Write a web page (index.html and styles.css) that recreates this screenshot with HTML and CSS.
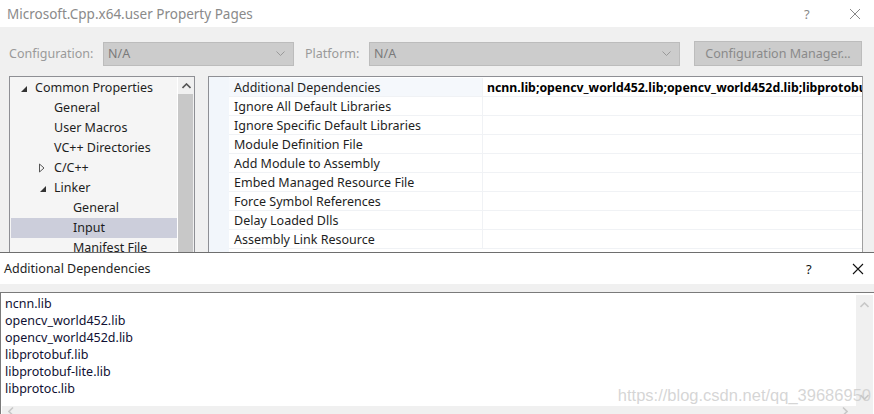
FILE: index.html
```html
<!DOCTYPE html>
<html>
<head>
<meta charset="utf-8">
<link rel="stylesheet" href="styles.css">
</head>
<body>
<div class="back">
  <div class="titlebar">
    <span class="title">Microsoft.Cpp.x64.user Property Pages</span>
    <span class="tb-help">?</span>
    <span class="tb-close">
      <svg width="12" height="12" viewBox="0 0 12 12"><path d="M1 1L11 11M11 1L1 11" stroke="#888" stroke-width="1" fill="none"/></svg>
    </span>
  </div>
  <div class="body">
    <div class="config-row">
      <span class="lbl lbl-config">Configuration:</span>
      <div class="combo combo-config"><span>N/A</span><svg class="chev" width="9" height="6" viewBox="0 0 9 6"><path d="M0.5 0.5L4.5 4.5L8.5 0.5" stroke="#999" fill="none"/></svg></div>
      <span class="lbl lbl-platform">Platform:</span>
      <div class="combo combo-platform"><span>N/A</span><svg class="chev" width="9" height="6" viewBox="0 0 9 6"><path d="M0.5 0.5L4.5 4.5L8.5 0.5" stroke="#999" fill="none"/></svg></div>
      <div class="btn">Configuration Manager...</div>
    </div>
    <div class="panels">
      <div class="tree">
        <div class="tree-list">
          <div class="ti l0"><svg class="tri" width="8" height="8" viewBox="0 0 8 8"><path d="M7 1V7H1Z" fill="#333"/></svg>Common Properties</div>
          <div class="ti l1">General</div>
          <div class="ti l1">User Macros</div>
          <div class="ti l1">VC++ Directories</div>
          <div class="ti l1"><svg class="tri tri-r" width="8" height="10" viewBox="0 0 8 10"><path d="M1.5 1V9L6 5Z" fill="none" stroke="#555" stroke-width="1"/></svg>C/C++</div>
          <div class="ti l1"><svg class="tri" width="8" height="8" viewBox="0 0 8 8"><path d="M7 1V7H1Z" fill="#333"/></svg>Linker</div>
          <div class="ti l2">General</div>
          <div class="ti l2 sel">Input</div>
          <div class="ti l2">Manifest File</div>
        </div>
        <div class="vscroll">
          <div class="sb-up"><svg width="9" height="6" viewBox="0 0 9 6"><path d="M0.5 5L4.5 1L8.5 5" stroke="#555" stroke-width="1.6" fill="none"/></svg></div>
          <div class="sb-thumb"></div>
        </div>
      </div>
      <div class="grid">
        <div class="gutter"></div>
        <div class="rows">
          <div class="row"><div class="name">Additional Dependencies</div><div class="val bold">ncnn.lib;opencv_world452.lib;opencv_world452d.lib;libprotobuf.lib;libprotobuf-lite.lib;libprotoc.lib</div></div>
          <div class="row"><div class="name">Ignore All Default Libraries</div><div class="val"></div></div>
          <div class="row"><div class="name">Ignore Specific Default Libraries</div><div class="val"></div></div>
          <div class="row"><div class="name">Module Definition File</div><div class="val"></div></div>
          <div class="row"><div class="name">Add Module to Assembly</div><div class="val"></div></div>
          <div class="row"><div class="name">Embed Managed Resource File</div><div class="val"></div></div>
          <div class="row"><div class="name">Force Symbol References</div><div class="val"></div></div>
          <div class="row"><div class="name">Delay Loaded Dlls</div><div class="val"></div></div>
          <div class="row"><div class="name">Assembly Link Resource</div><div class="val"></div></div>
        </div>
      </div>
    </div>
  </div>
</div>
<div class="front">
  <div class="f-titlebar">
    <span class="f-title">Additional Dependencies</span>
    <span class="f-help">?</span>
    <span class="f-close">
      <svg width="12" height="12" viewBox="0 0 12 12"><path d="M1 1L11 11M11 1L1 11" stroke="#111" stroke-width="1.1" fill="none"/></svg>
    </span>
  </div>
  <div class="f-body">
    <div class="editor">
      <div class="lines">
        <div>ncnn.lib</div>
        <div>opencv_world452.lib</div>
        <div>opencv_world452d.lib</div>
        <div>libprotobuf.lib</div>
        <div>libprotobuf-lite.lib</div>
        <div>libprotoc.lib</div>
      </div>
      <div class="e-vscroll">
        <svg width="9" height="6" viewBox="0 0 9 6"><path d="M0.5 5L4.5 1L8.5 5" stroke="#c8c8c8" stroke-width="1.6" fill="none"/></svg>
        <svg width="9" height="6" viewBox="0 0 9 6"><path d="M0.5 1L4.5 5L8.5 1" stroke="#c8c8c8" stroke-width="1.6" fill="none"/></svg>
      </div>
    </div>
    <div class="e-hscroll">
      <svg width="6" height="9" viewBox="0 0 6 9"><path d="M5 0.5L1 4.5L5 8.5" stroke="#c8c8c8" stroke-width="1.6" fill="none"/></svg>
      <svg width="6" height="9" viewBox="0 0 6 9"><path d="M1 0.5L5 4.5L1 8.5" stroke="#c8c8c8" stroke-width="1.6" fill="none"/></svg>
    </div>
    <div class="watermark">https://blog.csdn.net/qq_39686950</div>
  </div>
</div>
</body>
</html>
```

FILE: styles.css
```css
* { box-sizing: border-box; }
html, body {
  margin: 0;
  padding: 0;
  width: 874px;
  height: 414px;
  overflow: hidden;
  background: #f0f0f0;
  font-family: "Noto Sans", "Open Sans", sans-serif;
  font-size: 12px;
}
.back {
  height: 252px;
  overflow: hidden;
  background: #f0f0f0;
}
.titlebar {
  height: 27px;
  background: #fff;
  display: flex;
  align-items: center;
  padding-left: 7px;
}
.title {
  color: #8a8a8a;
  font-size: 13.5px;
  flex: 1;
}
.tb-help {
  color: #888;
  font-size: 13px;
  width: 45px;
}
.tb-close {
  width: 25px;
  display: flex;
  align-items: center;
}
.body {
  padding: 14px 0 0 9px;
}
.config-row {
  display: flex;
  align-items: center;
  height: 25px;
}
.lbl {
  color: #9a9a9a;
  font-size: 12.5px;
}
.lbl-config { width: 94px; }
.lbl-platform { width: 64px; margin-left: 11px; }
.combo {
  height: 24px;
  background: #cccccc;
  border: 1px solid #bcbcbc;
  display: flex;
  align-items: center;
  justify-content: space-between;
  padding: 0 8px 0 4px;
  color: #7a7a7a;
  font-size: 12.5px;
}
.combo-config { width: 191px; }
.combo-platform { width: 311px; }
.btn {
  margin-left: 14px;
  width: 168px;
  height: 25px;
  background: #cccccc;
  border: 1px solid #bcbcbc;
  color: #8a8a8a;
  font-size: 12.5px;
  display: flex;
  align-items: center;
  justify-content: center;
}
.panels {
  display: flex;
  margin-top: 10px;
  gap: 13px;
}
.tree {
  width: 186px;
  height: 200px;
  border: 1px solid #8e8f94;
  background: #f5f5f5;
  display: flex;
}
.tree-list {
  flex: 1;
  padding-top: 1px;
  padding-left: 1px;
}
.ti {
  height: 20px;
  line-height: 20px;
  color: #1e1e1e;
  font-size: 12.5px;
  position: relative;
  white-space: nowrap;
}
.l0 { padding-left: 24px; }
.l1 { padding-left: 43px; }
.l2 { padding-left: 62px; }
.sel { background: #cccedb; }
.tri {
  position: absolute;
  top: 7px;
}
.l0 .tri { left: 9px; }
.l1 .tri { left: 28px; }
.l1 .tri-r { top: 5px; left: 27px; }
.vscroll {
  width: 17px;
  background: #f0f0f0;
  border-left: 1px solid #fff;
  display: flex;
  flex-direction: column;
}
.sb-up {
  height: 17px;
  display: flex;
  align-items: center;
  justify-content: center;
}
.sb-thumb {
  margin: 0 1px 0 0;
  flex: 1;
  background: #c8c8c8;
}
.grid {
  width: 655px;
  height: 200px;
  border: 1px solid #8e8f94;
  border-right-color: #a0a0a0;
  background: #fff;
  display: flex;
}
.gutter {
  width: 20px;
  background: #f2f6fb;
}
.rows {
  flex: 1;
  padding-top: 1px;
  overflow: hidden;
}
.row {
  display: flex;
  height: 19px;
  border-bottom: 1px solid #f0f2f5;
}
.name {
  width: 253px;
  padding-left: 5px;
  padding-top: 1px;
  line-height: 18px;
  color: #1e1e1e;
  font-size: 12.5px;
  white-space: nowrap;
  background: #fff;
}
.row:first-child .name { background: #f5f8fc; }
.val {
  flex: 1;
  padding-left: 4px;
  padding-top: 1px;
  line-height: 18px;
  white-space: nowrap;
  overflow: hidden;
  color: #000;
  font-size: 12.3px;
  border-left: 1px solid #f0f2f5;
}
.bold { font-weight: 700; }

.front {
  height: 162px;
  border-top: 1px solid #6e6e6e;
  background: #f0f0f0;
}
.f-titlebar {
  height: 31px;
  background: #fff;
  display: flex;
  align-items: center;
  padding-left: 4px;
}
.f-title {
  flex: 1;
  color: #1e1e1e;
  font-size: 12.5px;
}
.f-help {
  width: 46px;
  font-size: 13px;
  color: #111;
}
.f-close {
  width: 22px;
  display: flex;
  align-items: center;
}
.f-body {
  margin-top: 8px;
  height: 122px;
  border-top: 1px solid #7a7a7a;
  border-left: 1px solid #7a7a7a;
  background: #fff;
  position: relative;
}
.editor {
  display: flex;
  height: 113px;
}
.lines {
  flex: 1;
  padding: 2px 0 0 4px;
  font-size: 12.5px;
  line-height: 17px;
  color: #101033;
}
.e-vscroll {
  width: 17px;
  margin: 2px 1px 0 0;
  background: #f0f0f0;
  display: flex;
  flex-direction: column;
  justify-content: space-between;
  align-items: center;
  padding: 7px 0 6px;
}
.e-hscroll {
  height: 10px;
  margin-left: 1px;
  margin-right: 1px;
  background: #f0f0f0;
  display: flex;
  justify-content: space-between;
  align-items: flex-end;
  padding: 0 25px 0 6px;
}
.watermark {
  position: absolute;
  right: 3px;
  top: 93px;
  font-family: "Liberation Sans", Arial, sans-serif;
  font-size: 16.5px;
  color: rgba(200, 200, 200, 0.75);
  white-space: nowrap;
}
```
